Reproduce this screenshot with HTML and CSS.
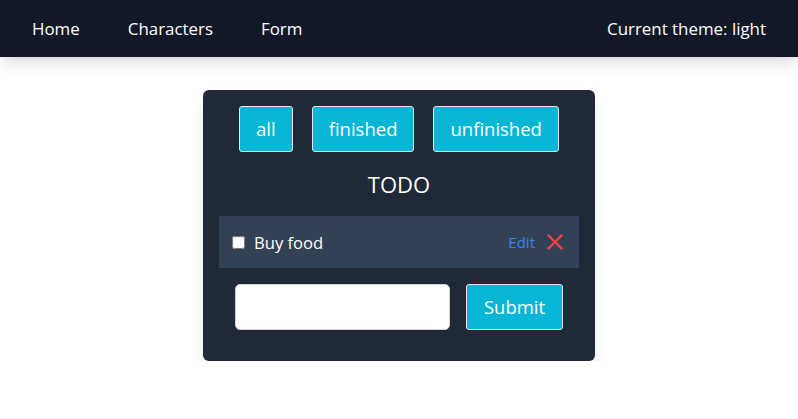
FILE: index.html
```html
<!DOCTYPE html>
<html lang="en">
<head>
<meta charset="utf-8">
<title>Todo</title>
<link rel="stylesheet" href="styles.css">
</head>
<body>
<nav class="navbar">
  <ul class="nav-links">
    <li><a href="#">Home</a></li>
    <li><a href="#">Characters</a></li>
    <li><a href="#">Form</a></li>
  </ul>
  <div class="theme">Current theme: light</div>
</nav>
<main class="main">
  <section class="card">
    <div class="filters">
      <button class="btn">all</button>
      <button class="btn">finished</button>
      <button class="btn">unfinished</button>
    </div>
    <h1 class="title">TODO</h1>
    <ul class="todos">
      <li class="todo">
        <label class="todo-label"><input type="checkbox" class="check"><span>Buy food</span></label>
        <div class="actions">
          <a href="#" class="edit">Edit</a>
          <button class="del" aria-label="Delete">
            <svg width="16" height="16" viewBox="0 0 16 16"><path d="M1.5 1.5 L14.5 14.5 M14.5 1.5 L1.5 14.5" stroke="#ef4444" stroke-width="2.4" stroke-linecap="round" fill="none"/></svg>
          </button>
        </div>
      </li>
    </ul>
    <form class="add-form">
      <input type="text" class="text-input">
      <button type="button" class="btn submit">Submit</button>
    </form>
  </section>
</main>
</body>
</html>
```

FILE: styles.css
```css
* { box-sizing: border-box; }
html, body { margin: 0; padding: 0; }
body {
  font-family: "Open Sans", "Noto Sans", sans-serif;
  background: #ffffff;
  color: #fff;
}
.navbar {
  height: 57px;
  background: #111827;
  display: flex;
  align-items: center;
  justify-content: space-between;
  padding: 0 32px;
  box-shadow: 0 10px 15px -3px rgba(0,0,0,0.12), 0 4px 6px -4px rgba(0,0,0,0.1);
}
.nav-links {
  list-style: none;
  margin: 0;
  padding: 0;
  display: flex;
  gap: 48px;
}
.nav-links a, .theme {
  color: #fff;
  text-decoration: none;
  font-size: 16.9px;
  line-height: 24px;
}
.main {
  display: flex;
  justify-content: center;
  padding-top: 33px;
}
.card {
  width: 392px;
  background: #1f2937;
  border-radius: 6px;
  padding: 16px 16px 31px;
  box-shadow: 0 10px 15px -3px rgba(0,0,0,0.12), 0 4px 6px -4px rgba(0,0,0,0.1);
}
.filters {
  display: flex;
  justify-content: center;
  gap: 19px;
}
.btn {
  font-family: inherit;
  background: #06b6d4;
  color: #fff;
  border: 1px solid #e5e7eb;
  border-radius: 3px;
  font-size: 18.5px;
  line-height: 28px;
  padding: 8px 16px;
  cursor: pointer;
}
.title {
  margin: 16px 0;
  text-align: center;
  font-weight: 400;
  font-size: 22px;
  line-height: 32px;
}
.todos { list-style: none; margin: 0; padding: 0; }
.todo {
  background: #334155;
  height: 52px;
  display: flex;
  align-items: center;
  justify-content: space-between;
  padding: 0 16px 0 12px;
}
.todo-label {
  display: flex;
  align-items: center;
  gap: 9px;
  font-size: 16.6px;
}
.check {
  width: 13px;
  height: 13px;
  margin: 0 0 0 1px;
}
.actions {
  display: flex;
  align-items: center;
  gap: 12px;
}
.edit {
  color: #3b82f6;
  text-decoration: none;
  font-size: 15px;
}
.del {
  background: none;
  border: 0;
  padding: 0;
  display: flex;
  cursor: pointer;
}
.add-form {
  display: flex;
  gap: 16px;
  padding: 0 16px;
  margin-top: 16px;
}
.text-input {
  flex: 1;
  height: 46px;
  border: 1px solid #d1d5db;
  border-radius: 5px;
  background: #fff;
}
.submit {
  width: 97px;
  padding: 8px 0;
  height: 46px;
}
```
